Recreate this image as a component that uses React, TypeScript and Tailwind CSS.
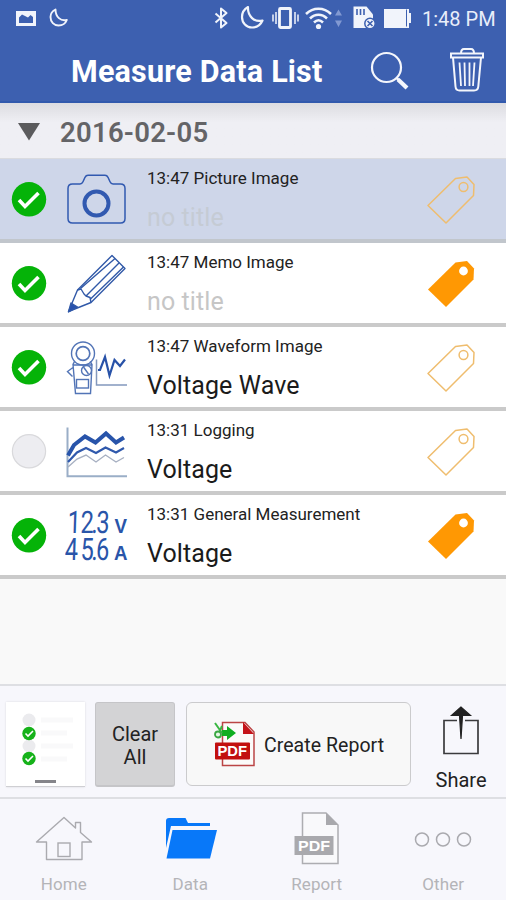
import React from 'react';

type Kind = 'picture' | 'memo' | 'waveform' | 'logging' | 'general';

interface Measurement {
  id: number;
  kind: Kind;
  label: string;
  title: string;
  checked: boolean;
  tagged: boolean;
  selected?: boolean;
}

const measurements: Measurement[] = [
  { id: 1, kind: 'picture', label: '13:47 Picture Image', title: '', checked: true, tagged: false, selected: true },
  { id: 2, kind: 'memo', label: '13:47 Memo Image', title: '', checked: true, tagged: true },
  { id: 3, kind: 'waveform', label: '13:47 Waveform Image', title: 'Voltage Wave', checked: true, tagged: false },
  { id: 4, kind: 'logging', label: '13:31 Logging', title: 'Voltage', checked: false, tagged: false },
  { id: 5, kind: 'general', label: '13:31 General Measurement', title: 'Voltage', checked: true, tagged: true },
];

const StatusBar = () => (
  <div className="flex h-9 items-center text-white">
    <svg className="ml-4 shrink-0" width="60" height="36" viewBox="0 0 60 36">
      <path fillRule="evenodd" fill="#f1f4fb" d="M0 11h20v15H0zM3 23h14v-6l-2.500-2-2.500 2.500-3-1.500-3-1.500-3 3z" />
      <path d="M39.500 9.500c-3 1.500-5 4-5 7.500 0 5 3.500 8.500 8 8.500 4 0 7-2 8.300-5.500-6 1.500-11.300-3-11.300-10.500z" fill="none" stroke="#f1f4fb" strokeWidth="1.900" strokeLinejoin="round" />
    </svg>
    <svg className="ml-auto shrink-0" width="200" height="36" viewBox="212 0 200 36">
      <g fill="none" stroke="#f1f4fb" strokeLinejoin="round">
        <path d="M215.500 13.500l11 9.500-5.500 4.500V8.500l5.500 4.500-11 9.500" strokeWidth="2" />
        <path d="M248 7c-3.500 2-6 5.500-6 10 0 6 4.500 10.500 10 10.500 5 0 8.500-2.500 10.500-7-8 2-15-4-14.500-13.500z" strokeWidth="2.200" />
        <rect x="279.500" y="8.500" width="11" height="19" rx="1" strokeWidth="2.800" />
        <path d="M276 12v12M295 12v12M273 14.500v7M298 14.500v7" strokeWidth="1.500" />
        <path d="M306 14c7-7 18-7 25 0M310 18.500c5-5 12-5 17 0M314 22.500c3-3 6-3 9 0" strokeWidth="2.500" />
      </g>
      <circle cx="318.500" cy="26.500" r="2.600" fill="#f1f4fb" />
      <path d="M335 15.500l3.500-6 3.500 6zM335 20.500h7l-3.500 6.500z" fill="#8299d2" />
      <path fill="#f1f4fb" d="M353.500 6.500h13l6.500 8V28h-19.500z" />
      <path d="M357 9v6M360.500 9v6M364 9v6" stroke="#3d60b0" strokeWidth="1.600" />
      <circle cx="370" cy="23.500" r="5.200" fill="#f1f4fb" stroke="#3d60b0" strokeWidth="1.500" />
      <path d="M367.500 21l5 5M372.500 21l-5 5" stroke="#3d60b0" strokeWidth="1.600" />
      <path fill="#f1f4fb" d="M384 9h25v4h2v10h-2v5h-25z" />
      <path d="M406.500 9.500v17" stroke="#3d60b0" strokeWidth="1" />
    </svg>
    <span className="mt-[2px] mr-[11px] ml-[10px] w-[73px] shrink-0 whitespace-nowrap text-[20px] leading-none text-[#e9eefa]">1:48 PM</span>
  </div>
);

const TitleBar = () => (
  <div className="flex h-[66px] items-center pt-1">
    <h1 className="mt-[3px] ml-[71px] w-[270px] whitespace-nowrap text-[30.500px] leading-none font-bold tracking-[0.200px] text-white">Measure Data List</h1>
    <svg className="ml-[27px] shrink-0" width="42" height="42" viewBox="0 0 42 42" fill="none" stroke="#f4f6fc">
      <circle cx="18.500" cy="17.500" r="14.500" strokeWidth="2.200" />
      <path d="M28.500 28l2.500 2" strokeWidth="2.500" />
      <path d="M30 29.500l9 8.500" strokeWidth="4.200" />
    </svg>
    <svg className="mb-[3px] ml-[39px] shrink-0" width="36" height="46" viewBox="0 0 36 46" fill="none" stroke="#f4f6fc" strokeWidth="2">
      <path d="M2 6.500h32v4H2zM12 6.500c0-3 1-4.500 3-4.500h7c2 0 3 1.500 3 4.500" />
      <path d="M4 10.500l2.500 29q.3 4 4 4h14.500q4 0 4.300-4L32 10.500" />
      <path d="M10.500 15.500l1.500 23.500M15.500 15.500l.5 23.500M20.500 15.500V39M25.500 15.500L24 39" strokeWidth="1.800" />
    </svg>
  </div>
);

const CheckMark = ({ checked }: { checked: boolean }) => (
  <svg className="ml-[11px] shrink-0" width="36" height="36" viewBox="0 0 36 36">
    {checked ? (
      <>
        <circle cx="18" cy="18.300" r="17.200" fill="#05b308" />
        <path d="M8 19l6 6.500L27.500 12" fill="none" stroke="#fff" strokeWidth="3.600" />
      </>
    ) : (
      <circle cx="18" cy="18.300" r="16.600" fill="#ededf1" stroke="#d9d9dc" strokeWidth="1.200" />
    )}
  </svg>
);

const PictureIcon = () => (
  <g fill="none" stroke="#3159b0" transform="translate(0 2.500)">
    <path d="M7.500 22.500H15q2 0 3-2.200l2-4.500q1-2 3-2h17q2 0 3 2l2 4.500q1 2.200 3 2.200h7.500q4.500 0 4.500 4.500V57q0 4.500-4.500 4.500h-48Q3 61.500 3 57V27q0-4.500 4.500-4.500z" strokeWidth="1.500" />
    <circle cx="31.500" cy="42" r="12" strokeWidth="4" />
  </g>
);

const MemoIcon = () => (
  <g fill="none" stroke="#3159a8" strokeWidth="1.400" strokeLinejoin="round">
    <path d="M47 12.500l13 13-34 34-22.500 9L12.500 47z" />
    <path d="M12.500 47l3.500-1 3 5 2 2 4 1.500 1 5M15.500 45.500L50 15.500M21 53L54 20M25 56.500L58.500 24" />
    <path d="M6 60l6.500 4L3.500 69z" fill="#2852ae" />
  </g>
);

const WaveformIcon = () => (
  <g fill="none" stroke="#5274b6" strokeWidth="1.400" transform="translate(0 -4.500)">
    <circle cx="18" cy="31" r="11.500" />
    <circle cx="18" cy="31" r="6.800" strokeWidth="1.700" />
    <path d="M9.500 39L8 42l2.500 29h15l1.500-29-2-3M8.500 42.500h18M8 45l-5.500 4 5 5" />
    <circle cx="21.500" cy="48" r="5" />
    <path d="M18.500 44.500l5 7" />
    <rect x="11.500" y="57" width="12" height="8.500" />
    <path d="M31.500 37v25.500H62" stroke="#8398bd" strokeWidth="1.500" />
    <path d="M33 47.500h2l5-13L44.500 53l5-15.500 5.500 6 5-6.500" stroke="#2852a8" strokeWidth="2.200" />
  </g>
);

const LoggingIcon = () => (
  <g fill="none">
    <path d="M2.500 16.500v48.700H62" stroke="#9aaec7" strokeWidth="2" />
    <path d="M3 44.500L9 34l11-8.500 10.500 6L41 22.500l10 9 8-5" stroke="#2854aa" strokeWidth="4" />
    <path d="M3 51l9-9.500 9-4.500 10 5 9.500-5.500L51 41.500l8-4.500" stroke="#3059ac" strokeWidth="2.200" />
    <path d="M3 56l9-8 9-4 10 7 9.500-7L51 51l8-4.500" stroke="#a7b0c2" strokeWidth="1.400" />
  </g>
);

const GeneralIcon = () => (
  <g fill="#2955a9" fontFamily="'Liberation Sans', sans-serif" fontWeight="bold">
    <g fontFamily="Roboto, sans-serif" fontSize="31" fontWeight="400">
      <text transform="translate(3 37.500) skewX(-2) scale(.76 1)" x="-1 16 30.500 37">12.3</text>
      <text transform="translate(3 64.500) skewX(-2) scale(.76 1)" x="-4.500 16 30.500 36.500">45.6</text>
    </g>
    <text x="49.500" y="37.500" fontSize="20" textLength="12.500" lengthAdjust="spacingAndGlyphs">V</text>
    <text x="49" y="64.500" fontSize="20" textLength="13.500" lengthAdjust="spacingAndGlyphs">A</text>
  </g>
);

const icons: Record<Kind, React.FC> = {
  picture: PictureIcon,
  memo: MemoIcon,
  waveform: WaveformIcon,
  logging: LoggingIcon,
  general: GeneralIcon,
};

const Tag = ({ filled }: { filled: boolean }) => (
  <svg className="mr-[30px] ml-auto shrink-0" width="50" height="50" viewBox="0 0 50 50">
    <path
      fillRule="evenodd"
      d="M2 31.500L29.500 4.500l11.500-1.500 7 7.500-.5 11L20 49z"
      fill={filled ? '#ff9803' : 'none'}
      stroke={filled ? 'none' : '#efbd6e'}
      strokeWidth="1.500"
      strokeLinejoin="round"
    />
    <circle cx="37.500" cy="13" r="4.400" fill={filled ? '#fff' : 'none'} stroke={filled ? 'none' : '#efbd6e'} strokeWidth="1.500" />
  </svg>
);

const MeasurementRow = ({ item }: { item: Measurement }) => {
  const Icon = icons[item.kind];
  return (
    <li className={`flex h-[84px] items-center border-b-4 ${item.selected ? 'border-[#c1c6cc] bg-[#ced6e9]' : 'border-[#cacaca] bg-white'}`}>
      <CheckMark checked={item.checked} />
      <svg className="ml-[18px] shrink-0" width="66" height="80" viewBox="0 0 66 80">
        <Icon />
      </svg>
      <div className="ml-4 flex h-20 flex-col whitespace-nowrap">
        <span className="mt-2 text-[17px] leading-[22px] text-[#222]">{item.label}</span>
        {item.title ? (
          <span className="mt-[15px] text-[25px] leading-7 tracking-[0.100px] text-[#1b1b1b]">{item.title}</span>
        ) : (
          <span className={`mt-[15px] text-[25px] leading-7 tracking-[0.100px] ${item.selected ? 'text-[#c5cbd4]' : 'text-[#c6c6c6]'}`}>no title</span>
        )}
      </div>
      <Tag filled={item.tagged} />
    </li>
  );
};

const SelectionThumb = () => (
  <div className="h-[85px] w-[79px] border-b border-[#cfcfd3] bg-white shadow-[0_0_2px_rgba(0,0,0,0.12)]">
    <svg width="79" height="84" viewBox="0 0 79 84">
      <g fill="#ebebee">
        <circle cx="23" cy="18" r="6.500" />
        <circle cx="23" cy="44" r="6.500" />
      </g>
      <path d="M35 18h32M35 31h26M35 44h32M35 57h26" stroke="#f9f9fa" strokeWidth="5" />
      {[31.5, 56.5].map(y => (
        <g key={y}>
          <circle cx="23" cy={y} r="6.700" fill="#16b21a" />
          <path d={`M19.500 ${y}l2.500 2.500 5-5`} fill="none" stroke="#fff" strokeWidth="1.600" />
        </g>
      ))}
      <path d="M29 79.500h21" stroke="#85858a" strokeWidth="3" />
    </svg>
  </div>
);

const ActionBar = () => (
  <div className="flex h-[115px] border-y-2 border-[#dedfe3] bg-[#f7f7fc] pt-4 pl-[6px]">
    <SelectionThumb />
    <button className="ml-[10px] h-[85px] w-20 rounded-[3px] border border-b-2 border-[#c5c5c8] bg-[#d3d3d5] pt-[3px] text-[20px] leading-[23px] text-[#222]">
      Clear<br />All
    </button>
    <button className="ml-[11px] flex h-[84px] w-[225px] items-center rounded-md border border-[#cbcbcd] bg-[#f8f8f8]">
      <svg className="ml-[26px] shrink-0" width="46" height="50" viewBox="0 0 46 50">
        <path d="M9.500 3.500H32L41 13v33.500H9.500z" fill="#fbfaf9" stroke="#bb4545" strokeWidth="1.500" />
        <path d="M30 3v12h11z" fill="#c41319" />
        <rect x="2" y="23.500" width="35" height="17" rx="1" fill="#c2100e" />
        <text x="4.500" y="37" fill="#fff" fontFamily="'Liberation Sans', sans-serif" fontSize="14" fontWeight="bold" textLength="29.500" lengthAdjust="spacingAndGlyphs">PDF</text>
        <path d="M9 11h5V7l9 7-9 7v-4H9z" fill="#0fae20" />
        <path d="M2 4l7 10M9 7l-2.500 6" stroke="#39b742" strokeWidth="2" />
        <circle cx="5" cy="15.500" r="3" fill="#e7f6e7" stroke="#39a742" strokeWidth="1.800" />
      </svg>
      <span className="mt-[3px] ml-[5px] whitespace-nowrap text-[19.500px] tracking-[0.050px] text-[#222]">Create Report</span>
    </button>
    <button className="ml-[25px] flex w-[50px] flex-col items-center pt-px">
      <svg width="40" height="52" viewBox="0 0 40 52">
        <path d="M16 17.500H3v33h34v-33H24" fill="none" stroke="#3b3b3d" strokeWidth="1.700" />
        <path d="M20 4L10.500 12.500h8L20 36l1.500-23.500h8z" fill="#222" stroke="#222" strokeWidth="1.200" />
      </svg>
      <span className="mt-[13px] text-[20px] leading-6 text-[#222]">Share</span>
    </button>
  </div>
);

const HomeIcon = () => (
  <g fill="none" stroke="#aaaaaf" strokeWidth="1.400">
    <path d="M2.500 32L30 7.500 41.500 18v-5.500h5v10L57.500 32H48v17.500H12.500V32z" strokeLinejoin="round" />
    <rect x="24" y="33" width="12" height="13.500" />
  </g>
);

const DataIcon = () => (
  <g fill="#0878f9">
    <path d="M6 38V11q0-3 3-3h16.500l2.500 5h22v3H11z" />
    <path d="M12.500 20H57l-7 28.500H6.500z" />
  </g>
);

const ReportIcon = () => (
  <g>
    <path d="M15.500 3H39l12 12v38.500H15.500z" fill="#f9f9fb" stroke="#adadb1" strokeWidth="1.500" />
    <path d="M39 3v12h12z" fill="#a9a9ad" />
    <rect x="7.500" y="26" width="39" height="19" fill="#a9a9ad" />
    <text x="11" y="41" fill="#fff" fontFamily="'Liberation Sans', sans-serif" fontSize="15" fontWeight="bold" textLength="32" lengthAdjust="spacingAndGlyphs">PDF</text>
  </g>
);

const OtherIcon = () => (
  <g fill="none" stroke="#aaaaaf" strokeWidth="1.500">
    <circle cx="9" cy="29.500" r="6.500" />
    <circle cx="30" cy="29.500" r="6.500" />
    <circle cx="51" cy="29.500" r="6.500" />
  </g>
);

const tabs = [
  { name: 'Home', Icon: HomeIcon },
  { name: 'Data', Icon: DataIcon },
  { name: 'Report', Icon: ReportIcon },
  { name: 'Other', Icon: OtherIcon },
];

const App = () => {
  return <div className="flex h-[900px] w-[506px] flex-col overflow-hidden bg-[#f9f9f9] font-[Roboto,sans-serif]">
      <header className="h-[103px] border-b-2 border-[#3159ad] bg-[#3d60b0]">
        <StatusBar />
        <TitleBar />
      </header>
      <div className="flex h-14 items-center border-b border-[#dadbdf] bg-linear-to-b from-[#dcdce1] to-[#efeff4] to-35%">
        <svg className="mt-[2px] ml-[17px]" width="24" height="20" viewBox="0 0 24 20">
          <path d="M1 1h22L12 18.500z" fill="#5b5b5d" />
        </svg>
        <h2 className="mt-[4px] ml-[19px] whitespace-nowrap text-[27.500px] leading-none font-semibold tracking-[0.250px] text-[#646467]">2016-02-05</h2>
      </div>
      <ul>
        {measurements.map(item => <MeasurementRow key={item.id} item={item} />)}
      </ul>
      <div className="mt-auto">
        <ActionBar />
        <nav className="grid h-[101px] grid-cols-4 bg-[#f7f7fc]">
          {tabs.map(({ name, Icon }) => <button key={name} className="flex flex-col items-center pt-[11px] pl-px">
              <svg width="60" height="56" viewBox="0 0 60 56">
                <Icon />
              </svg>
              <span className="mt-[7px] text-[17px] leading-[22px] tracking-[0.100px] text-[#b4b4b8]">{name}</span>
            </button>)}
        </nav>
      </div>
    </div>;
};

export default App;
